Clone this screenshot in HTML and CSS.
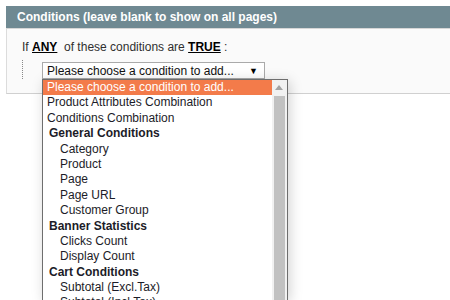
FILE: index.html
```html
<!DOCTYPE html>
<html lang="en">
<head>
  <meta charset="UTF-8">
  <title>Conditions</title>
  <link rel="stylesheet" href="styles.css">
</head>
<body>
  <div class="fieldset">
    <h4 class="legend">Conditions (leave blank to show on all pages)</h4>
    <div class="fieldset-body">
      <p class="rule-head">If <b class="link">ANY</b>&nbsp; of these conditions are <b class="link">TRUE</b> :</p>
      <div class="rule-children">
        <div class="chooser">
          <div class="select">
            <span>Please choose a condition to add...</span>
            <span class="arrow">&#9660;</span>
          </div>
          <div class="listbox">
            <ul class="options">
              <li class="opt selected">Please choose a condition to add...</li>
              <li class="opt">Product Attributes Combination</li>
              <li class="opt">Conditions Combination</li>
              <li class="group">General Conditions</li>
              <li class="opt child">Category</li>
              <li class="opt child">Product</li>
              <li class="opt child">Page</li>
              <li class="opt child">Page URL</li>
              <li class="opt child">Customer Group</li>
              <li class="group">Banner Statistics</li>
              <li class="opt child">Clicks Count</li>
              <li class="opt child">Display Count</li>
              <li class="group">Cart Conditions</li>
              <li class="opt child">Subtotal (Excl.Tax)</li>
              <li class="opt child">Subtotal (Incl.Tax)</li>
            </ul>
            <div class="scrollbar">
              <div class="scroll-up"></div>
              <div class="thumb"></div>
            </div>
          </div>
        </div>
      </div>
    </div>
  </div>
</body>
</html>
```

FILE: styles.css
```css
html,
body {
  height: 100%;
}

body {
  margin: 0;
  padding: 6px 0 0 6px;
  box-sizing: border-box;
  background: #ffffff;
  font-family: "Liberation Sans", Arial, sans-serif;
  font-size: 12px;
  color: #2f2f2f;
}

.legend {
  margin: 0;
  height: 22px;
  line-height: 22px;
  padding-left: 11px;
  background: #6f8992;
  color: #ffffff;
  font-size: 12px;
  font-weight: bold;
}

.fieldset-body {
  background: #fafafa;
  border-left: 1px solid #dcdcdc;
  border-top: 1px solid #d6d6d6;
  border-bottom: 1px solid #d0d0d0;
  padding: 11px 0 14px 15px;
}

.rule-head {
  margin: 0;
  line-height: 14px;
}

.link {
  color: #000;
  text-decoration: underline;
}

.rule-children {
  margin-top: 6px;
  padding: 2px 0 0 19px;
  border-left: 1px dotted #888;
}

.chooser {
  position: relative;
  width: 223px;
}

.select {
  box-sizing: border-box;
  height: 17px;
  display: flex;
  align-items: center;
  justify-content: space-between;
  padding: 0 6px 0 4px;
  border: 1px solid #aaa;
  background: #fff;
  color: #111;
}

.arrow {
  font-size: 9px;
  color: #000;
}

.listbox {
  position: absolute;
  top: 17px;
  left: 0;
  z-index: 5;
  width: 246px;
  height: 221px;
  box-sizing: border-box;
  display: flex;
  overflow: hidden;
  border: 1px solid #6e6e6e;
  border-bottom: 0;
  background: #fff;
  box-shadow: 2px 2px 12px rgba(0, 0, 0, 0.18);
}

.options {
  list-style: none;
  margin: 0;
  padding: 0;
  flex: 1;
}

.opt,
.group {
  height: 15.4px;
  line-height: 15.8px;
  padding-left: 4px;
  color: #1c1c28;
  white-space: nowrap;
}

.group {
  font-weight: bold;
  padding-left: 6px;
}

.child {
  padding-left: 17px;
}

.selected {
  background: #f37b4a;
  color: #fff;
}

.scrollbar {
  width: 15px;
  background: #f1f1f1;
  display: flex;
  flex-direction: column;
  align-items: center;
}

.scroll-up {
  height: 16px;
  width: 15px;
  position: relative;
}

.scroll-up::after {
  content: "";
  position: absolute;
  left: 3px;
  top: 5px;
  border-left: 4.5px solid transparent;
  border-right: 4.5px solid transparent;
  border-bottom: 5px solid #a3a3a3;
}

.thumb {
  width: 11px;
  flex: 1;
  background: #c1c1c1;
}
```
